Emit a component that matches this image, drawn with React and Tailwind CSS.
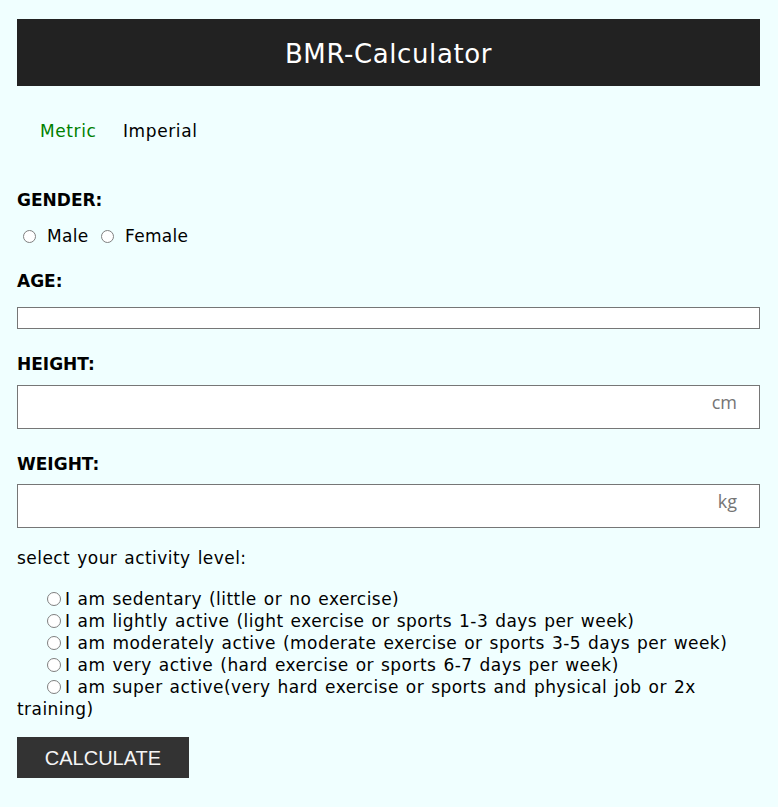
import React from "react";

const activities = [
  "I am sedentary (little or no exercise)",
  "I am lightly active (light exercise or sports 1-3 days per week)",
  "I am moderately active (moderate exercise or sports 3-5 days per week)",
  "I am very active (hard exercise or sports 6-7 days per week)",
  "I am super active(very hard exercise or sports and physical job or 2x",
];

function Radio({ name, className = "" }) {
  return (
    <input
      type="radio"
      name={name}
      className={
        "shrink-0 appearance-none rounded-full border border-[#7f7f7f] bg-white " + className
      }
    />
  );
}

export default function App() {
  return (
    <div className="min-h-screen bg-[#f0ffff] pl-[17px] pr-[18px] pt-[19px] pb-[29px] font-['DejaVu_Sans',Verdana,sans-serif] text-black">
      <header className="flex h-[67px] items-center justify-center bg-[#222222] pt-[3px] text-[26px] tracking-[0.6px] text-white">
        BMR-Calculator
      </header>

      <nav className="mt-[34px] flex h-[22px] items-center pl-[23px] text-[17px] leading-[22px] tracking-[0.6px]">
        <span className="w-[83px] text-[#008000]">Metric</span>
        <span>Imperial</span>
      </nav>

      <div className="mt-[47px] h-[22px] text-[17px] font-bold leading-[22px]">GENDER:</div>
      <div className="mt-[14px] flex h-[22px] items-center text-[17px] leading-[22px] tracking-[0.3px]">
        <Radio name="g" className="ml-[6px] h-[13px] w-[13px]" />
        <span className="ml-[11px] w-[54px]">Male</span>
        <Radio name="g" className="h-[13px] w-[13px]" />
        <span className="ml-[11px]">Female</span>
      </div>

      <div className="mt-[23px] h-[22px] text-[17px] font-bold leading-[22px]">AGE:</div>
      <input type="text" className="mt-[15px] block h-[22px] w-full border border-[#767676] bg-white" />

      <div className="mt-[24px] h-[22px] text-[17px] font-bold leading-[22px]">HEIGHT:</div>
      <div className="relative mt-[10px] h-[44px] border border-[#767676] bg-white">
        <span className="absolute right-[22px] top-[4px] font-['Open_Sans',sans-serif] text-[18px] leading-[25px] text-[#757575]">
          cm
        </span>
      </div>

      <div className="mt-[24px] h-[22px] text-[17px] font-bold leading-[22px]">WEIGHT:</div>
      <div className="relative mt-[9px] h-[44px] border border-[#767676] bg-white">
        <span className="absolute right-[22px] top-[4px] font-['Open_Sans',sans-serif] text-[18px] leading-[25px] text-[#757575]">
          kg
        </span>
      </div>

      <div className="mt-[19px] h-[22px] text-[17px] leading-[22px] tracking-[0.45px] [word-spacing:1.2px]">
        select your activity level:
      </div>

      <div className="mt-[19px] text-[17px] leading-[22px] tracking-[0.45px] [word-spacing:1.2px]">
        {activities.map((a, i) => (
          <React.Fragment key={i}>
            <Radio name="act" className="ml-[30px] mr-[4px] inline-block h-[14px] w-[14px] align-[-1px]" />
            {a}
            <br />
          </React.Fragment>
        ))}
        training)
      </div>

      <button className="mt-[17px] flex h-[41px] w-[172px] items-center justify-center bg-[#333333] font-['Liberation_Sans',Arial,sans-serif] text-[20px] text-[#f5f5f5]">
        CALCULATE
      </button>
    </div>
  );
}
